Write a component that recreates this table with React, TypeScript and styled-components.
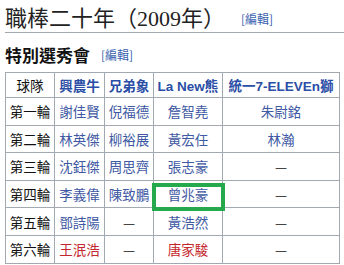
import React from 'react'
import styled, { createGlobalStyle } from 'styled-components'

const Global = createGlobalStyle`
  html, body { margin: 0; padding: 0; background: #fff; }
  body { font-family: "Liberation Sans", "Noto Sans CJK TC", sans-serif; }
`

const Page = styled.div`
  padding: 5px 0 0 5px;
  width: 339px;
`

const Title = styled.h1`
  margin: 0;
  height: 27px;
  line-height: 27px;
  font-family: "Liberation Serif", "Noto Sans CJK TC", serif;
  font-weight: 400;
  font-size: 22px;
  color: #222;
  border-bottom: 1px solid #a2a9b1;
  display: flex;
  align-items: center;
  white-space: nowrap;
`

const Sub = styled.h2`
  margin: 11px 0 0;
  height: 22px;
  line-height: 22px;
  font-size: 17px;
  font-weight: 700;
  color: #111;
  display: flex;
  align-items: center;
  font-family: "Noto Sans CJK TC", sans-serif;
`

const Edit = styled.span<{ $gap: number }>`
  margin-left: ${p => p.$gap}px;
  font-size: 12px;
  font-weight: 400;
  color: #3a5fb0;
  font-family: "Noto Sans CJK TC", sans-serif;
`

const Table = styled.table`
  margin-top: 6px;
  border-collapse: collapse;
  table-layout: fixed;
  width: 334px;
  font-family: "Noto Sans CJK TC", sans-serif;
  font-size: 13.5px;
`

const Th = styled.th<{ $plain?: boolean }>`
  height: 24px;
  padding: 0;
  border: 1px solid #a2a9b1;
  text-align: center;
  font-weight: ${p => (p.$plain ? 400 : 700)};
  color: ${p => (p.$plain ? '#111' : '#2a4ea6')};
  font-family: "Liberation Sans", "Noto Sans CJK TC", sans-serif;
  white-space: nowrap;
`

const Td = styled.td<{ $tone?: 'link' | 'red' | 'plain'; $mark?: boolean }>`
  position: relative;
  height: 26.6px;
  padding: 0;
  border: 1px solid #a2a9b1;
  text-align: center;
  white-space: nowrap;
  color: ${p => (p.$tone === 'red' ? '#c3262c' : p.$tone === 'plain' ? '#111' : '#4059a3')};
  &::after {
    content: '';
    display: ${p => (p.$mark ? 'block' : 'none')};
    position: absolute;
    left: -2px;
    right: -3px;
    top: 2px;
    bottom: -4px;
    border: 4px solid #26a84c;
  }
`

type Row = { round: string; picks: string[]; red?: boolean }

const rows: Row[] = [
  { round: '第一輪', picks: ['謝佳賢', '倪福德', '詹智堯', '朱尉銘'] },
  { round: '第二輪', picks: ['林英傑', '柳裕展', '黃宏任', '林瀚'] },
  { round: '第三輪', picks: ['沈鈺傑', '周思齊', '張志豪', '—'] },
  { round: '第四輪', picks: ['李義偉', '陳致鵬', '曾兆豪', '—'] },
  { round: '第五輪', picks: ['鄧詩陽', '—', '黃浩然', '—'] },
  { round: '第六輪', picks: ['王泯浩', '—', '唐家駿', '—'], red: true },
]

const teams = ['興農牛', '兄弟象', 'La New熊', '統一7-ELEVEn獅']

export default function App() {
  return (
    <Page>
      <Global />
      <Title>
        職棒二十年（2009年）<Edit $gap={16}>[編輯]</Edit>
      </Title>
      <Sub>
        特別選秀會<Edit $gap={11}>[編輯]</Edit>
      </Sub>
      <Table>
        <colgroup>
          <col style={{ width: 49 }} />
          <col style={{ width: 50 }} />
          <col style={{ width: 49 }} />
          <col style={{ width: 69 }} />
          <col style={{ width: 117 }} />
        </colgroup>
        <thead>
          <tr>
            <Th $plain>球隊</Th>
            {teams.map(t => (
              <Th key={t}>{t}</Th>
            ))}
          </tr>
        </thead>
        <tbody>
          {rows.map(r => (
            <tr key={r.round}>
              <Td $tone="plain">{r.round}</Td>
              {r.picks.map((p, i) => (
                <Td
                  key={i}
                  $tone={p === '—' ? 'plain' : r.red && (i === 0 || i === 2) ? 'red' : 'link'}
                  $mark={p === '曾兆豪'}
                >
                  {p}
                </Td>
              ))}
            </tr>
          ))}
        </tbody>
      </Table>
    </Page>
  )
}
